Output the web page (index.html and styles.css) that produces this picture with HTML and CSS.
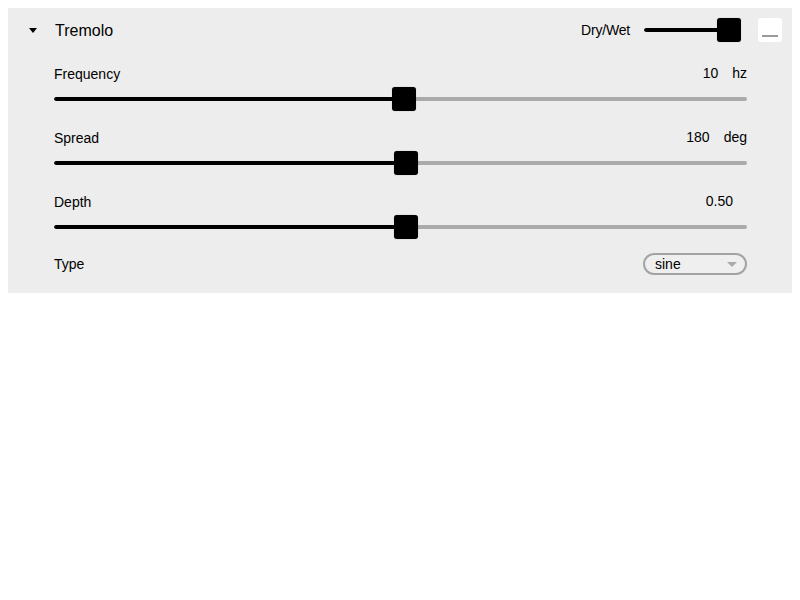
FILE: index.html
```html
<!DOCTYPE html>
<html>
<head>
<meta charset="utf-8">
<link rel="stylesheet" href="styles.css">
</head>
<body>
<div class="panel">
  <div class="header">
    <span class="caret"></span>
    <span class="title">Tremolo</span>
    <span class="spacer"></span>
    <span class="drywet-label">Dry/Wet</span>
    <div class="slider drywet">
      <div class="track"><div class="fill" style="width:75px"></div></div>
      <div class="thumb" style="left:73px"></div>
    </div>
    <div class="minbox"><span class="minline"></span></div>
  </div>
  <div class="params">
    <div class="param">
      <div class="labelline">
        <span class="label">Frequency</span>
        <span class="value">10</span><span class="unit">hz</span>
      </div>
      <div class="slider">
        <div class="track"><div class="fill" style="width:50.5%"></div></div>
        <div class="thumb" style="left:calc(50.5% - 12px)"></div>
      </div>
    </div>
    <div class="param">
      <div class="labelline">
        <span class="label">Spread</span>
        <span class="value">180</span><span class="unit">deg</span>
      </div>
      <div class="slider">
        <div class="track"><div class="fill" style="width:50.8%"></div></div>
        <div class="thumb" style="left:calc(50.8% - 12px)"></div>
      </div>
    </div>
    <div class="param">
      <div class="labelline">
        <span class="label">Depth</span>
        <span class="value">0.50</span><span class="unit"></span>
      </div>
      <div class="slider">
        <div class="track"><div class="fill" style="width:50.8%"></div></div>
        <div class="thumb" style="left:calc(50.8% - 12px)"></div>
      </div>
    </div>
    <div class="typerow">
      <span class="label">Type</span>
      <div class="select"><span>sine</span><span class="arrow"></span></div>
    </div>
  </div>
</div>
</body>
</html>
```
FILE: styles.css
```css
html, body {
  margin: 0;
  padding: 0;
  background: #fff;
}
body {
  padding: 8px;
  font-family: "Liberation Sans", Arial, sans-serif;
  color: #000;
}
.panel {
  background: #ededed;
  width: 784px;
  height: 285px;
  box-sizing: border-box;
  padding: 10px 10px 0 0;
}
.header {
  display: flex;
  align-items: center;
  height: 24px;
  margin-bottom: 24px;
}
.caret {
  width: 0;
  height: 0;
  border-left: 4px solid transparent;
  border-right: 4px solid transparent;
  border-top: 5px solid #000;
  margin-left: 21px;
  margin-top: 1px;
}
.title {
  font-size: 16px;
  margin-left: 18px;
  line-height: 24px;
  padding-top: 2px;
}
.spacer { flex: 1; }
.drywet-label {
  font-size: 14px;
  letter-spacing: -0.2px;
  line-height: 20px;
}
.slider {
  position: relative;
  height: 24px;
}
.slider.drywet {
  width: 97px;
  margin-left: 14px;
}
.track {
  position: absolute;
  left: 0;
  right: 0;
  top: 10px;
  height: 4px;
  border-radius: 2px;
  background: #aaaaaa;
  overflow: hidden;
}
.fill {
  height: 100%;
  background: #000;
  border-radius: 2px 0 0 2px;
}
.thumb {
  position: absolute;
  top: 0;
  width: 24px;
  height: 24px;
  background: #000;
  border-radius: 3px;
  box-shadow: 0 0 1px rgba(0,0,0,0.4);
}
.minbox {
  width: 24px;
  height: 24px;
  background: #fff;
  border-radius: 3px;
  margin-left: 17px;
  position: relative;
  display: flex;
  justify-content: center;
  align-items: flex-end;
}
.minline {
  width: 16px;
  height: 2px;
  background: #9a9a9a;
  margin-bottom: 5px;
}
.params {
  padding-left: 46px;
  padding-right: 35px;
}
.param {
  margin-bottom: 19px;
}
.labelline {
  display: flex;
  align-items: center;
  height: 17px;
  line-height: 17px;
  font-size: 14px;
  margin-bottom: 4px;
}
.label {
  flex: 1;
  font-size: 14px;
}
.value {
  font-size: 14px;
  margin-top: -2px;
}
.unit {
  margin-left: 14px;
  font-size: 14px;
  margin-top: -2px;
}
.typerow {
  display: flex;
  align-items: center;
  height: 22px;
  margin-top: -5px;
}
.select {
  width: 104px;
  height: 22px;
  box-sizing: border-box;
  border: 2px solid #a3a3a3;
  border-radius: 11px;
  display: flex;
  align-items: center;
  justify-content: space-between;
  padding: 0 8px 0 10px;
  font-size: 14px;
  background: #efefef;
}
.arrow {
  width: 0;
  height: 0;
  border-left: 5px solid transparent;
  border-right: 5px solid transparent;
  border-top: 5px solid #aaaaaa;
}
```
